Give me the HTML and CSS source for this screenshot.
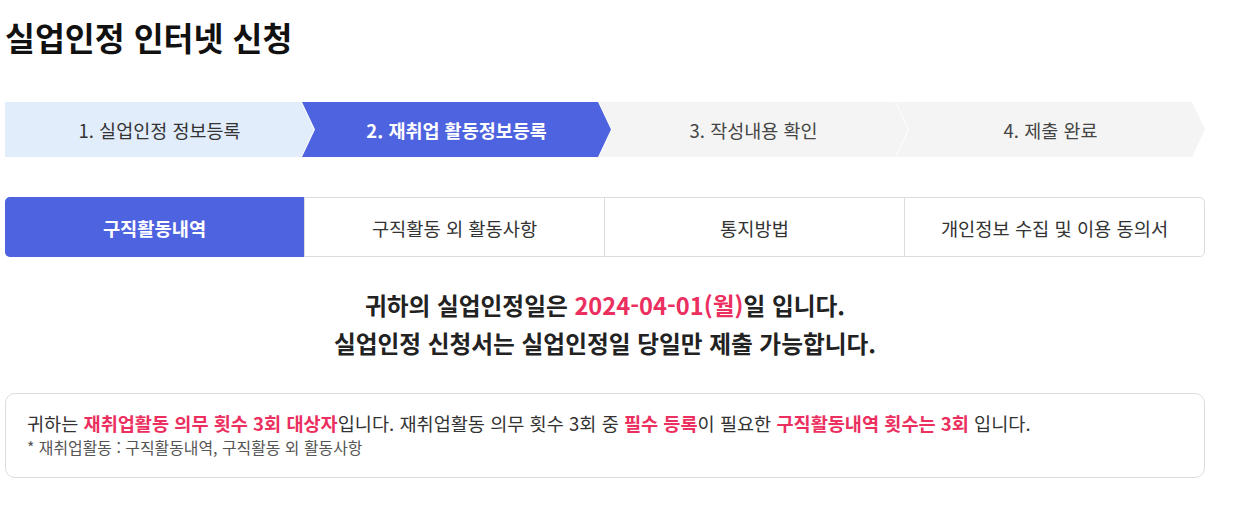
FILE: index.html
```html
<!DOCTYPE html>
<html lang="ko">
<head>
<meta charset="utf-8">
<title>실업인정 인터넷 신청</title>
<link rel="stylesheet" href="styles.css">
</head>
<body>
<main class="page">
  <h1 class="title">실업인정 인터넷 신청</h1>

  <ol class="steps">
    <li class="step step-done">1. 실업인정 정보등록</li>
    <li class="step step-current">2. 재취업 활동정보등록</li>
    <li class="step">3. 작성내용 확인</li>
    <li class="step">4. 제출 완료</li>
  </ol>

  <nav class="tabs">
    <a class="tab tab-active">구직활동내역</a>
    <a class="tab">구직활동 외 활동사항</a>
    <a class="tab">통지방법</a>
    <a class="tab">개인정보 수집 및 이용 동의서</a>
  </nav>

  <div class="notice">
    <p>귀하의 실업인정일은 <span class="hl">2024-04-01(월)</span>일 입니다.</p>
    <p>실업인정 신청서는 실업인정일 당일만 제출 가능합니다.</p>
  </div>

  <div class="infobox">
    <p class="info-main">귀하는 <strong class="hl">재취업활동 의무 횟수 3회 대상자</strong>입니다. 재취업활동 의무 횟수 3회 중 <strong class="hl">필수 등록</strong>이 필요한 <strong class="hl">구직활동내역 횟수는 3회</strong> 입니다.</p>
    <p class="info-sub">* 재취업활동 : 구직활동내역, 구직활동 외 활동사항</p>
  </div>
</main>
</body>
</html>
```
FILE: styles.css
```css
* { box-sizing: border-box; }
html, body { margin: 0; padding: 0; background: #fff; }
body {
  font-family: "Noto Sans CJK KR", "Noto Sans", sans-serif;
  color: #222;
}
.page {
  width: 1200px;
  margin-left: 5px;
  padding-top: 14px;
}
.title {
  margin: 0;
  font-size: 32.5px;
  font-weight: 700;
  line-height: 46px;
  color: #111;
}
.steps {
  list-style: none;
  margin: 42px 0 0;
  padding: 0;
  display: flex;
  height: 55px;
}
.step {
  flex: 1;
  display: flex;
  align-items: center;
  justify-content: center;
  background: #f4f4f4;
  color: #444;
  font-size: 18.5px;
  margin-left: -12px;
  clip-path: polygon(0 0, calc(100% - 13px) 0, 100% 50%, calc(100% - 13px) 100%, 0 100%, 13px 50%);
}
.step:first-child {
  margin-left: 0;
  clip-path: polygon(0 0, calc(100% - 13px) 0, 100% 50%, calc(100% - 13px) 100%, 0 100%);
}
.step-done { background: #e2edfc; color: #333; }
.step-current { background: #4e63df; color: #fff; font-weight: 700; }

.tabs {
  display: flex;
  margin-top: 40px;
  height: 60px;
  border: 1px solid #dcdcdc;
  border-radius: 5px;
}
.tab {
  flex: 1;
  display: flex;
  align-items: center;
  justify-content: center;
  font-size: 18.7px;
  color: #333;
  border-left: 1px solid #dcdcdc;
}
.tab:first-child { border-left: 0; }
.tab-active {
  background: #4e63df;
  color: #fff;
  font-weight: 700;
  margin: -1px 0 -1px -1px;
  border-radius: 5px 0 0 5px;
}
.notice {
  margin-top: 29px;
  text-align: center;
  font-size: 23.7px;
  font-weight: 700;
  line-height: 38px;
  color: #222;
}
.notice p { margin: 0; }
.hl { color: #eb2f5f; font-weight: 700; }
.infobox {
  margin-top: 31px;
  border: 1px solid #dcdcdc;
  border-radius: 10px;
  height: 85px;
  padding: 15px 21px 0;
}
.infobox p { margin: 0; }
.info-main { font-size: 18.6px; line-height: 27px; color: #333; }
.info-sub { font-size: 15.9px; line-height: 23px; color: #555; }
```
